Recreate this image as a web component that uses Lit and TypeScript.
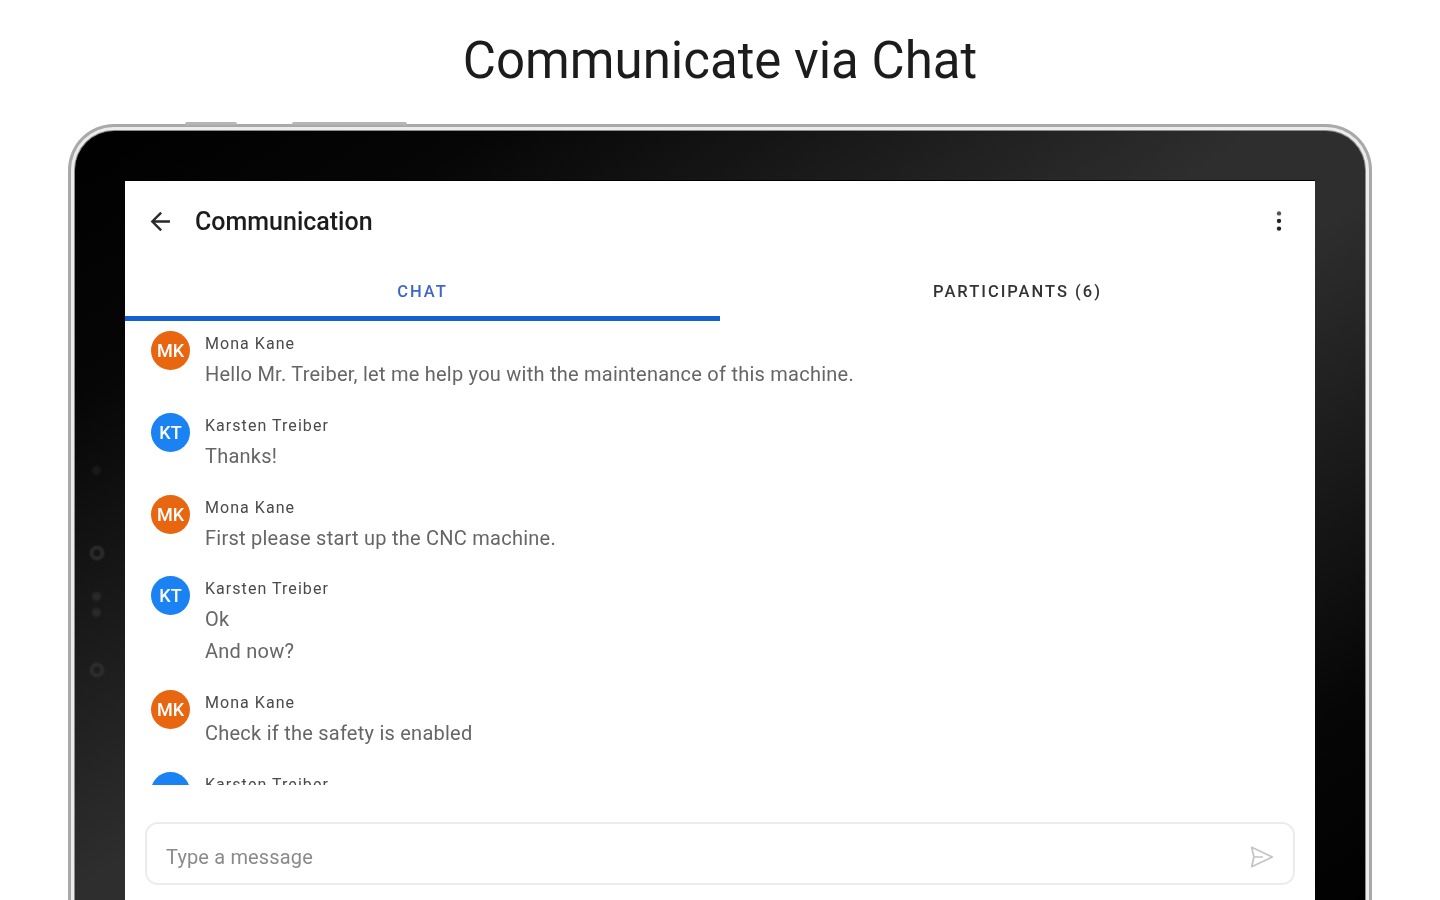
import { LitElement, html, css, svg } from 'lit';
import { customElement } from 'lit/decorators.js';

type Msg = { who: 'mk' | 'kt'; lines: string[] };

const PEOPLE = {
  mk: { name: 'Mona Kane', initials: 'MK' },
  kt: { name: 'Karsten Treiber', initials: 'KT' }
};

// last row is cut off by the list in the reference, only its top shows
const MESSAGES: Msg[] = [
  { who: 'mk', lines: ['Hello Mr. Treiber, let me help you with the maintenance of this machine.'] },
  { who: 'kt', lines: ['Thanks!'] },
  { who: 'mk', lines: ['First please start up the CNC machine.'] },
  { who: 'kt', lines: ['Ok', 'And now?'] },
  { who: 'mk', lines: ['Check if the safety is enabled'] },
  { who: 'kt', lines: [] }
];

const backIcon = svg`<path d="M19 11H6.8l5.6-5.6L11 4l-8 8 8 8 1.4-1.4L6.8 13H19z" fill="#2a2a2a"/>`;
const moreIcon = svg`<circle cx="12" cy="5" r="2" fill="#555"/><circle cx="12" cy="12" r="2" fill="#222"/><circle cx="12" cy="19" r="2" fill="#222"/>`;
const sendIcon = svg`<path d="M2.5 3 21.5 12 2.5 21 4.5 12ZM4.5 12H13" fill="none" stroke="#c4c4c4" stroke-width="1.6" stroke-linejoin="round"/>`;

@customElement('app-root')
export class AppRoot extends LitElement {
  static styles = css`
    :host {
      display: block;
      height: 900px;
      overflow: hidden;
      background: #fff;
      font-family: Roboto, 'Liberation Sans', sans-serif;
    }
    .title {
      height: 124px;
      box-sizing: border-box;
      padding-top: 30px;
      text-align: center;
      font-size: 51px;
      line-height: 62px;
      font-weight: 400;
      color: #1c1c1c;
      filter: blur(0.6px);
    }
    .device {
      position: relative;
      height: 840px;
      margin: 0 68px;
      box-sizing: border-box;
      padding: 3px;
      border-radius: 46px 46px 0 0;
      background: #a9a9a9;
      filter: blur(0.7px);
    }
    .key {
      position: absolute;
      top: -2px;
      height: 3px;
      background: #b5b5b5;
      border-radius: 2px 2px 0 0;
    }
    .key.a { left: 117px; width: 52px; }
    .key.b { left: 224px; width: 115px; }
    .rim {
      height: 100%;
      box-sizing: border-box;
      padding: 3px;
      border-radius: 43px 43px 0 0;
      background: #ececec;
    }
    .bezel {
      position: relative;
      height: 100%;
      box-sizing: border-box;
      padding: 49px 50px 0;
      border: 1px solid #8c8c8c;
      border-bottom: 0;
      border-radius: 40px 40px 0 0;
      background: linear-gradient(to bottom right, #000 0%, #060606 16%, #2e2e2e 46%, #2e2e2e 54%, #060606 84%, #000 100%);
    }
    .sensor {
      position: absolute;
      left: 15px;
      border-radius: 50%;
      box-sizing: border-box;
      filter: blur(0.8px);
    }
    .sensor.ring { width: 14px; height: 14px; border: 3px solid #333; }
    .sensor.dot { width: 9px; height: 9px; margin-left: 2px; background: #2a2a2a; }
    .screen {
      height: 100%;
      background: #fff;
      border-top: 1px solid #000;
      box-sizing: border-box;
      display: flex;
      flex-direction: column;
      overflow: hidden;
    }
    .topbar {
      height: 80px;
      flex: none;
      display: flex;
      align-items: center;
      padding: 0 23px 0 21.5px;
      color: #1c1c1c;
    }
    .topbar svg { width: 29px; height: 29px; flex: none; }
    .topbar .more { width: 26px; height: 26px; }
    .topbar h1 {
      flex: 1;
      margin: 0 0 0 19.5px;
      padding-top: 2px;
      font-size: 25px;
      font-weight: 500;
      line-height: 30px;
    }
    .tabs {
      height: 60px;
      flex: none;
      display: flex;
    }
    .tab {
      flex: 1;
      display: flex;
      align-items: center;
      justify-content: center;
      padding-top: 5px;
      box-sizing: border-box;
      font-size: 16.5px;
      font-weight: 500;
      letter-spacing: 2px;
      color: #333;
      border-bottom: 5px solid transparent;
    }
    .tab.on {
      color: #3f66c4;
      border-bottom-color: #1560cf;
    }
    .list {
      height: 464px;
      flex: none;
      box-sizing: border-box;
      padding: 10px 26px 0;
      overflow: hidden;
      display: flex;
      flex-direction: column;
      gap: 22.75px;
    }
    .row { display: flex; gap: 15px; flex: none; }
    .avatar {
      width: 39px;
      height: 39px;
      flex: none;
      border-radius: 50%;
      display: flex;
      align-items: center;
      justify-content: center;
      color: #fff;
      font-size: 18px;
      font-weight: 500;
    }
    .avatar.mk { background: #e8660f; }
    .avatar.kt { background: #1a82f2; }
    .name {
      font-size: 16px;
      letter-spacing: 1.05px;
      line-height: 26px;
      color: #4a4a4a;
    }
    .text {
      font-size: 20px;
      letter-spacing: 0.24px;
      line-height: 32px;
      color: #666;
    }
    .name + .text { margin-top: 1px; }
    .composer {
      flex: 1;
      padding: 37px 20px 0 20px;
    }
    .input {
      height: 63px;
      box-sizing: border-box;
      display: flex;
      align-items: center;
      justify-content: space-between;
      padding: 6px 18px 0 19px;
      border: 2px solid #ececec;
      border-radius: 13px;
      font-size: 20px;
      letter-spacing: 0.15px;
      color: #8a8a8a;
    }
    .input svg { width: 26px; height: 26px; }
  `;

  render() {
    return html`
      <div class="title">Communicate via Chat</div>
      <div class="device">
        <div class="key a"></div>
        <div class="key b"></div>
        <div class="rim">
          <div class="bezel">
            <div class="sensor dot" style="top:334.5px;background:#1a1a1a"></div>
            <div class="sensor ring" style="top:415px"></div>
            <div class="sensor dot" style="top:460.5px"></div>
            <div class="sensor dot" style="top:476.5px"></div>
            <div class="sensor ring" style="top:532px"></div>
            <div class="screen">
              <div class="topbar">
                <svg viewBox="0 0 24 24">${backIcon}</svg>
                <h1>Communication</h1>
                <svg class="more" viewBox="0 0 24 24">${moreIcon}</svg>
              </div>
              <div class="tabs">
                <div class="tab on">CHAT</div>
                <div class="tab">PARTICIPANTS (6)</div>
              </div>
              <div class="list">
                ${MESSAGES.map(m => html`
                  <div class="row">
                    <div class="avatar ${m.who}">${PEOPLE[m.who].initials}</div>
                    <div>
                      <div class="name">${PEOPLE[m.who].name}</div>
                      ${m.lines.map(l => html`<div class="text">${l}</div>`)}
                    </div>
                  </div>
                `)}
              </div>
              <div class="composer">
                <div class="input">
                  <span>Type a message</span>
                  <svg viewBox="0 0 24 24">${sendIcon}</svg>
                </div>
              </div>
            </div>
          </div>
        </div>
      </div>
    `;
  }
}
